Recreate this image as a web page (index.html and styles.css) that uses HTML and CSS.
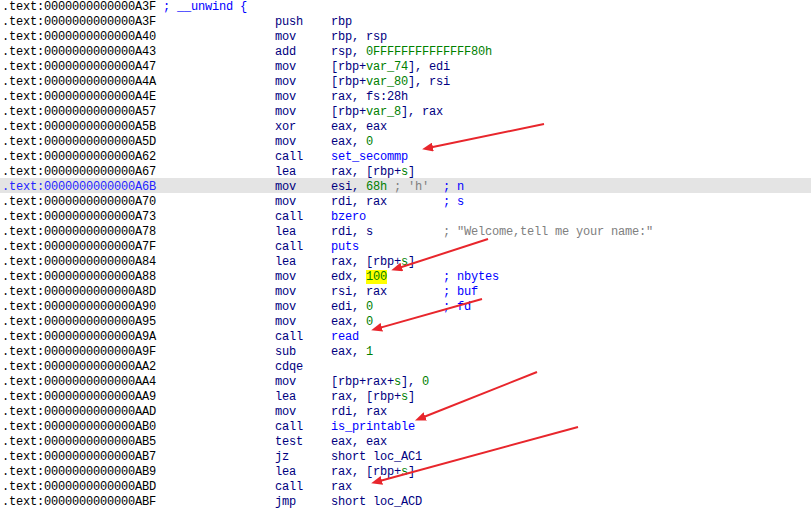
FILE: index.html
```html
<!DOCTYPE html>
<html lang="en">
<head>
    <meta charset="UTF-8">
    <title>IDA View</title>
    <link rel="stylesheet" href="styles.css">
</head>
<body>
    <div class="listing">
        <div class="row"><span class="addr">.text:0000000000000A3F <span class="cm">; __unwind {</span></span></div>
        <div class="row"><span class="addr">.text:0000000000000A3F</span><span class="mn">push</span><span class="op">rbp</span></div>
        <div class="row"><span class="addr">.text:0000000000000A40</span><span class="mn">mov</span><span class="op">rbp, rsp</span></div>
        <div class="row"><span class="addr">.text:0000000000000A43</span><span class="mn">add</span><span class="op">rsp, <span class="n">0FFFFFFFFFFFFFF80h</span></span></div>
        <div class="row"><span class="addr">.text:0000000000000A47</span><span class="mn">mov</span><span class="op">[rbp+<span class="n">var_74</span>], edi</span></div>
        <div class="row"><span class="addr">.text:0000000000000A4A</span><span class="mn">mov</span><span class="op">[rbp+<span class="n">var_80</span>], rsi</span></div>
        <div class="row"><span class="addr">.text:0000000000000A4E</span><span class="mn">mov</span><span class="op">rax, fs:28h</span></div>
        <div class="row"><span class="addr">.text:0000000000000A57</span><span class="mn">mov</span><span class="op">[rbp+<span class="n">var_8</span>], rax</span></div>
        <div class="row"><span class="addr">.text:0000000000000A5B</span><span class="mn">xor</span><span class="op">eax, eax</span></div>
        <div class="row"><span class="addr">.text:0000000000000A5D</span><span class="mn">mov</span><span class="op">eax, <span class="n">0</span></span></div>
        <div class="row"><span class="addr">.text:0000000000000A62</span><span class="mn">call</span><span class="op"><span class="fn">set_secommp</span></span></div>
        <div class="row"><span class="addr">.text:0000000000000A67</span><span class="mn">lea</span><span class="op">rax, [rbp+<span class="n">s</span>]</span></div>
        <div class="row current"><span class="addr">.text:0000000000000A6B</span><span class="mn">mov</span><span class="op">esi, <span class="n">68h</span> <span class="gray">; 'h'</span></span><span class="cm">; n</span></div>
        <div class="row"><span class="addr">.text:0000000000000A70</span><span class="mn">mov</span><span class="op">rdi, rax</span><span class="cm">; s</span></div>
        <div class="row"><span class="addr">.text:0000000000000A73</span><span class="mn">call</span><span class="op"><span class="fn">bzero</span></span></div>
        <div class="row"><span class="addr">.text:0000000000000A78</span><span class="mn">lea</span><span class="op">rdi, s</span><span class="gray">; "Welcome,tell me your name:"</span></div>
        <div class="row"><span class="addr">.text:0000000000000A7F</span><span class="mn">call</span><span class="op"><span class="fn">puts</span></span></div>
        <div class="row"><span class="addr">.text:0000000000000A84</span><span class="mn">lea</span><span class="op">rax, [rbp+<span class="n">s</span>]</span></div>
        <div class="row"><span class="addr">.text:0000000000000A88</span><span class="mn">mov</span><span class="op">edx, <span class="n mark">100</span></span><span class="cm">; nbytes</span></div>
        <div class="row"><span class="addr">.text:0000000000000A8D</span><span class="mn">mov</span><span class="op">rsi, rax</span><span class="cm">; buf</span></div>
        <div class="row"><span class="addr">.text:0000000000000A90</span><span class="mn">mov</span><span class="op">edi, <span class="n">0</span></span><span class="cm">; fd</span></div>
        <div class="row"><span class="addr">.text:0000000000000A95</span><span class="mn">mov</span><span class="op">eax, <span class="n">0</span></span></div>
        <div class="row"><span class="addr">.text:0000000000000A9A</span><span class="mn">call</span><span class="op"><span class="fn">read</span></span></div>
        <div class="row"><span class="addr">.text:0000000000000A9F</span><span class="mn">sub</span><span class="op">eax, <span class="n">1</span></span></div>
        <div class="row"><span class="addr">.text:0000000000000AA2</span><span class="mn">cdqe</span></div>
        <div class="row"><span class="addr">.text:0000000000000AA4</span><span class="mn">mov</span><span class="op">[rbp+rax+<span class="n">s</span>], <span class="n">0</span></span></div>
        <div class="row"><span class="addr">.text:0000000000000AA9</span><span class="mn">lea</span><span class="op">rax, [rbp+<span class="n">s</span>]</span></div>
        <div class="row"><span class="addr">.text:0000000000000AAD</span><span class="mn">mov</span><span class="op">rdi, rax</span></div>
        <div class="row"><span class="addr">.text:0000000000000AB0</span><span class="mn">call</span><span class="op"><span class="fn">is_printable</span></span></div>
        <div class="row"><span class="addr">.text:0000000000000AB5</span><span class="mn">test</span><span class="op">eax, eax</span></div>
        <div class="row"><span class="addr">.text:0000000000000AB7</span><span class="mn">jz</span><span class="op">short loc_AC1</span></div>
        <div class="row"><span class="addr">.text:0000000000000AB9</span><span class="mn">lea</span><span class="op">rax, [rbp+<span class="n">s</span>]</span></div>
        <div class="row"><span class="addr">.text:0000000000000ABD</span><span class="mn">call</span><span class="op">rax</span></div>
        <div class="row"><span class="addr">.text:0000000000000ABF</span><span class="mn">jmp</span><span class="op">short loc_ACD</span></div>
    </div>

    <!-- red annotation arrows drawn over the listing -->
    <svg class="arrows" width="811" height="512" viewBox="0 0 811 512">
        <defs>
            <marker id="head" markerUnits="userSpaceOnUse" markerWidth="11" markerHeight="9" refX="5" refY="4.5" orient="auto">
                <path d="M0,0 L11,4.5 L0,9 Z" fill="#e8262c"/>
            </marker>
        </defs>
        <g stroke="#e8262c" stroke-width="2" marker-end="url(#head)">
            <line x1="544" y1="124" x2="428" y2="148"/>
            <line x1="488" y1="239" x2="397" y2="268.5"/>
            <line x1="482" y1="299" x2="377" y2="328.6"/>
            <line x1="537" y1="372" x2="420.6" y2="418.2"/>
            <line x1="578" y1="427" x2="377" y2="481.7"/>
        </g>
    </svg>
</body>
</html>
```

FILE: styles.css
```css
body {
    margin: 0;
    background-color: #ffffff;
    overflow: hidden;
    position: relative;
    width: 811px;
    height: 512px;
}
.listing {
    margin-top: -2px;
    font-family: 'Liberation Mono', monospace;
    font-size: 12px;
    letter-spacing: -0.2px;
    color: #000080;
}
.row {
    display: flex;
    box-sizing: border-box;
    height: 15px;
    padding-top: 2px;
    padding-left: 2px;
    line-height: 15px;
    white-space: pre;
}
.row.current {
    background-color: #e4e4e4;
}
.addr {
    width: 273px;
    flex-shrink: 0;
    color: #000000;
}
.current .addr {
    color: #2424ff;
}
.mn {
    width: 56px;
    flex-shrink: 0;
}
.op {
    width: 112px;
    flex-shrink: 0;
}
.n {
    color: #008000;
}
.mark {
    background-color: #ffff00;
}
.fn {
    color: #0000ff;
}
.cm {
    color: #0000ff;
}
.gray {
    color: #808080;
}
.arrows {
    position: absolute;
    left: 0;
    top: 0;
    pointer-events: none;
}
```
